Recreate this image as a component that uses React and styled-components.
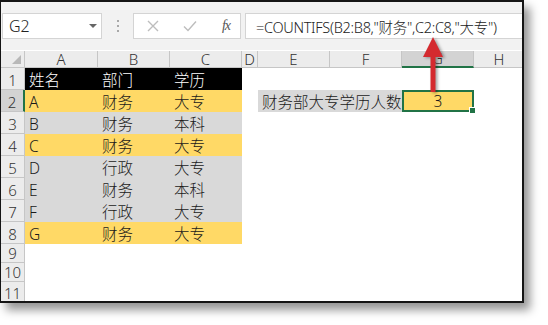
import React from "react";
import styled, { createGlobalStyle } from "styled-components";

const GlobalStyle = createGlobalStyle`
  html, body {
    margin: 0;
    padding: 0;
    background: #ffffff;
  }
  body {
    font-family: "Noto Sans", "Noto Sans CJK SC", sans-serif;
    font-weight: 300;
  }
`;

const COLS = [24, 73, 72, 72, 16, 72, 72, 72, 51];
const ROWS = [17, 22, 22, 22, 22, 22, 22, 22, 22, 19, 19, 21];
const LETTERS = ["A", "B", "C", "D", "E", "F", "G", "H"];

const data = [
  { fill: "head", cells: ["姓名", "部门", "学历"] },
  { fill: "yellow", cells: ["A", "财务", "大专"] },
  { fill: "gray", cells: ["B", "财务", "本科"] },
  { fill: "yellow", cells: ["C", "财务", "大专"] },
  { fill: "gray", cells: ["D", "行政", "大专"] },
  { fill: "gray", cells: ["E", "财务", "本科"] },
  { fill: "gray", cells: ["F", "行政", "大专"] },
  { fill: "yellow", cells: ["G", "财务", "大专"] },
];

const fills = {
  head: { bg: "#000000", fg: "#ffffff" },
  yellow: { bg: "#ffd966", fg: "#1a1a1a" },
  gray: { bg: "#d9d9d9", fg: "#1a1a1a" },
  none: { bg: "#ffffff", fg: "#1a1a1a" },
};

const Page = styled.div`
  width: 548px;
  height: 325px;
  box-sizing: border-box;
`;

const Frame = styled.div`
  position: relative;
  width: 524px;
  height: 303px;
  box-sizing: border-box;
  border: 2px solid #151515;
  border-left-width: 1px;
  background: #ffffff;
  overflow: hidden;
  box-shadow: 6px 7px 9px rgba(0, 0, 0, 0.42);
`;

const Toolbar = styled.div`
  display: flex;
  align-items: center;
  height: 48px;
  background: #f2f2f2;
  padding: 0 0 0 1px;
  box-sizing: border-box;
`;

const NameBox = styled.div`
  display: flex;
  align-items: center;
  justify-content: space-between;
  width: 100px;
  height: 26px;
  box-sizing: border-box;
  background: #ffffff;
  border: 1px solid #d4d4d4;
  padding: 0 4px 0 6px;
  font-size: 16px;
  color: #222;
`;

const Caret = styled.span`
  width: 0;
  height: 0;
  border-left: 4px solid transparent;
  border-right: 4px solid transparent;
  border-top: 4px solid #666;
`;

const Grip = styled.div`
  display: flex;
  flex-direction: column;
  gap: 3px;
  margin: 0 14px 0 15px;
  span {
    width: 2px;
    height: 2px;
    background: #a8a8a8;
  }
`;

const ButtonBox = styled.div`
  display: flex;
  align-items: center;
  justify-content: space-between;
  width: 108px;
  height: 26px;
  box-sizing: border-box;
  background: #ffffff;
  border: 1px solid #d4d4d4;
  padding: 0 10px 0 13px;
`;

const Fx = styled.span`
  font-family: "Liberation Serif", serif;
  font-style: italic;
  font-size: 14px;
  color: #555;
  letter-spacing: -1px;
`;

const FormulaBox = styled.div`
  flex: 1;
  display: flex;
  align-items: center;
  height: 26px;
  margin-left: 4px;
  box-sizing: border-box;
  background: #ffffff;
  border: 1px solid #d4d4d4;
  border-right: none;
  padding-left: 10px;
  font-size: 14.5px;
  letter-spacing: -0.3px;
  color: #222;
  white-space: nowrap;
`;

const Sheet = styled.div`
  display: grid;
  grid-template-columns: ${COLS.map((c) => c + "px").join(" ")};
  grid-template-rows: ${ROWS.map((r) => r + "px").join(" ")};
  margin-top: 1px;
`;

const Corner = styled.div`
  background: #ececec;
  border-right: 1px solid #c6c6c6;
  border-bottom: 1px solid #c6c6c6;
  box-sizing: border-box;
  position: relative;
  &::after {
    content: "";
    position: absolute;
    right: 3px;
    bottom: 3px;
    border-left: 9px solid transparent;
    border-bottom: 9px solid #b8b8b8;
  }
`;

const ColHead = styled.div`
  display: flex;
  align-items: flex-end;
  justify-content: center;
  background: ${(p) => (p.$active ? "#d3d3d3" : "#ececec")};
  border-right: 1px solid #c6c6c6;
  border-bottom: ${(p) => (p.$active ? "2px solid #217346" : "1px solid #c6c6c6")};
  box-sizing: border-box;
  font-size: 15px;
  line-height: 16px;
  color: #333;
`;

const RowHead = styled.div`
  display: flex;
  align-items: flex-end;
  justify-content: center;
  background: ${(p) => (p.$active ? "#d3d3d3" : "#ececec")};
  border-right: ${(p) => (p.$active ? "2px solid #217346" : "1px solid #c6c6c6")};
  border-bottom: 1px solid #c6c6c6;
  box-sizing: border-box;
  font-size: 15px;
  line-height: 18px;
  color: #333;
  overflow: hidden;
`;

const Cell = styled.div`
  display: flex;
  align-items: flex-end;
  justify-content: ${(p) => (p.$center ? "center" : "flex-start")};
  grid-column: ${(p) => (p.$span ? `span ${p.$span}` : "auto")};
  padding-left: ${(p) => (p.$center ? 0 : 4)}px;
  box-sizing: border-box;
  background: ${(p) => fills[p.$fill].bg};
  color: ${(p) => fills[p.$fill].fg};
  font-size: 15.5px;
  line-height: 20px;
  white-space: nowrap;
`;

const ActiveCell = styled(Cell)`
  position: relative;
  border: 2px solid #217346;
  line-height: 17px;
  &::after {
    content: "";
    position: absolute;
    right: -4px;
    bottom: -4px;
    width: 5px;
    height: 5px;
    background: #217346;
    border: 1px solid #ffffff;
  }
`;

const Arrow = styled.svg`
  position: absolute;
  left: 418px;
  top: 34px;
  filter: drop-shadow(2px 1px 1.5px rgba(0, 0, 0, 0.35));
`;

function App() {
  return (
    <Page>
      <GlobalStyle />
      <Frame>
        <Toolbar>
          <NameBox>
            G2
            <Caret />
          </NameBox>
          <Grip>
            <span />
            <span />
            <span />
          </Grip>
          <ButtonBox>
            <svg width="12" height="12" viewBox="0 0 12 12">
              <path d="M1 1 L11 11 M11 1 L1 11" stroke="#bdbdbd" strokeWidth="1.4" />
            </svg>
            <svg width="14" height="12" viewBox="0 0 14 12">
              <path d="M1 6.5 L5 10.5 L13 1.5" stroke="#bdbdbd" strokeWidth="1.4" fill="none" />
            </svg>
            <Fx>fx</Fx>
          </ButtonBox>
          <FormulaBox>=COUNTIFS(B2:B8,"财务",C2:C8,"大专")</FormulaBox>
        </Toolbar>

        <Sheet>
          <Corner />
          {LETTERS.map((l) => (
            <ColHead key={l} $active={l === "G"}>
              {l}
            </ColHead>
          ))}

          {ROWS.slice(1).map((_, i) => {
            const r = i + 1;
            const row = data[i];
            return (
              <React.Fragment key={r}>
                <RowHead $active={r === 2}>{r}</RowHead>
                {row
                  ? row.cells.map((c, j) => (
                      <Cell key={j} $fill={row.fill}>
                        {c}
                      </Cell>
                    ))
                  : [0, 1, 2].map((j) => <Cell key={j} $fill="none" />)}
                <Cell $fill="none" />
                {r === 2 ? (
                  <>
                    <Cell $fill="gray" $span={2}>
                      财务部大专学历人数
                    </Cell>
                    <ActiveCell $fill="yellow" $center>
                      3
                    </ActiveCell>
                  </>
                ) : (
                  <>
                    <Cell $fill="none" />
                    <Cell $fill="none" />
                    <Cell $fill="none" />
                  </>
                )}
                <Cell $fill="none" />
              </React.Fragment>
            );
          })}
        </Sheet>

        <Arrow width="28" height="58" viewBox="0 0 28 58">
          <rect x="11.5" y="18" width="5" height="38" fill="#d42a2f" />
          <polygon points="14,1 4,21 24,21" fill="#d42a2f" />
        </Arrow>
      </Frame>
    </Page>
  );
}

export default App;
